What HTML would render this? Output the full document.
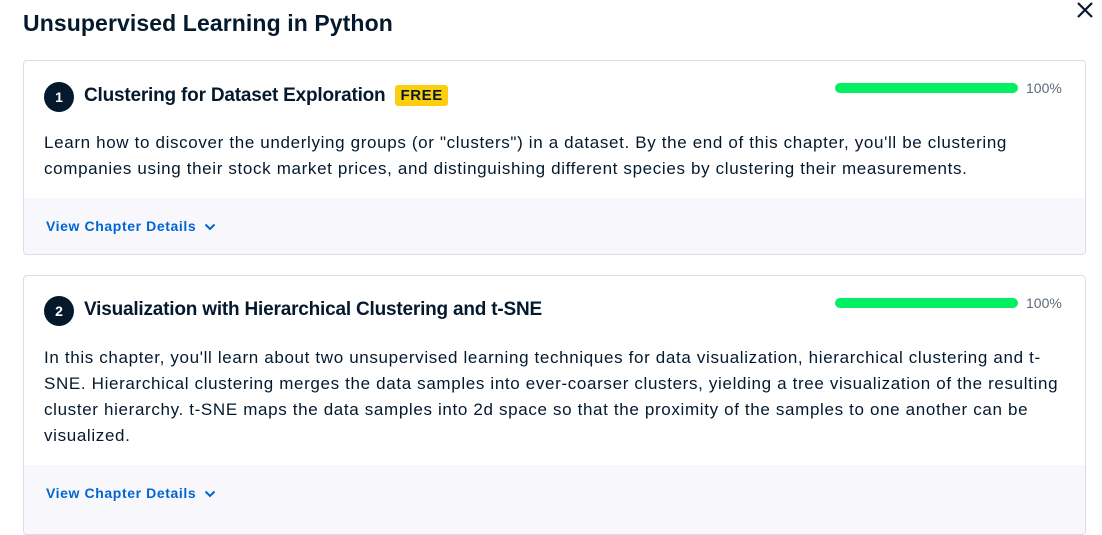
<!DOCTYPE html>
<html><head><meta charset="utf-8"><style>
*{box-sizing:border-box;margin:0;padding:0}
body{width:1102px;height:517px;overflow:hidden;background:#fff;font-family:"Liberation Sans",sans-serif;color:#05192d;position:relative}
h1{position:absolute;left:23px;top:10px;font-size:23px;font-weight:bold;letter-spacing:0.1px}
.x{position:absolute;left:1075px;top:0px;width:20px;height:20px}
.card{position:absolute;left:23px;width:1063px;border:1px solid #dcdde3;border-radius:4px;overflow:hidden;background:#fff}
.num{position:absolute;left:20px;width:30px;height:30px;border-radius:50%;background:#05192d;color:#fff;font-size:14px;font-weight:bold;text-align:center;line-height:30px}
.t{position:absolute;left:60px;font-size:19px;font-weight:bold;letter-spacing:-0.2px}
.free{display:inline-block;background:#fcce0d;border-radius:3px;font-size:15px;padding:2px 5px;margin-left:10px;vertical-align:1px;letter-spacing:0.6px}
.bar{position:absolute;left:811px;width:183px;height:10px;border-radius:5px;background:#03ef62}
.pct{position:absolute;left:1002px;font-size:14px;color:#5d6a77}
.d{position:absolute;left:20px;width:1040px;font-size:17px;letter-spacing:0.65px;line-height:26px;color:#05192d;white-space:nowrap}
.foot{position:absolute;left:0;right:0;background:#f7f7fc}
.foot span{position:absolute;left:22px;font-size:14px;font-weight:bold;color:#0065d1;letter-spacing:0.6px}
</style></head><body>
<h1>Unsupervised Learning in Python</h1>
<svg class="x" viewBox="0 0 20 20"><path d="M3 3L17 17M17 3L3 17" stroke="#05192d" stroke-width="2.2" fill="none"/></svg>

<div class="card" style="top:60px;height:195px">
  <div class="num" style="top:21px">1</div>
  <div class="t" style="top:24px">Clustering for Dataset Exploration<span class="free">FREE</span></div>
  <div class="bar" style="top:22px"></div>
  <div class="pct" style="top:19px">100%</div>
  <div class="d" style="top:69px">Learn how to discover the underlying groups (or "clusters") in a dataset. By the end of this chapter, you'll be clustering<br>companies using their stock market prices, and distinguishing different species by clustering their measurements.</div>
  <div class="foot" style="top:137px;height:58px"><span style="top:20px">View Chapter Details <svg width="12" height="8" viewBox="0 0 12 8" style="margin-left:3px"><path d="M1.5 1.5L6 6L10.5 1.5" stroke="#0065d1" stroke-width="2" fill="none"/></svg></span></div>
</div>

<div class="card" style="top:275px;height:260px">
  <div class="num" style="top:20px">2</div>
  <div class="t" style="top:23px">Visualization with Hierarchical Clustering and t-SNE</div>
  <div class="bar" style="top:22px"></div>
  <div class="pct" style="top:19px">100%</div>
  <div class="d" style="top:69px">In this chapter, you'll learn about two unsupervised learning techniques for data visualization, hierarchical clustering and t-<br>SNE. Hierarchical clustering merges the data samples into ever-coarser clusters, yielding a tree visualization of the resulting<br>cluster hierarchy. t-SNE maps the data samples into 2d space so that the proximity of the samples to one another can be<br>visualized.</div>
  <div class="foot" style="top:189px;height:80px"><span style="top:20px">View Chapter Details <svg width="12" height="8" viewBox="0 0 12 8" style="margin-left:3px"><path d="M1.5 1.5L6 6L10.5 1.5" stroke="#0065d1" stroke-width="2" fill="none"/></svg></span></div>
</div>
</body></html>
